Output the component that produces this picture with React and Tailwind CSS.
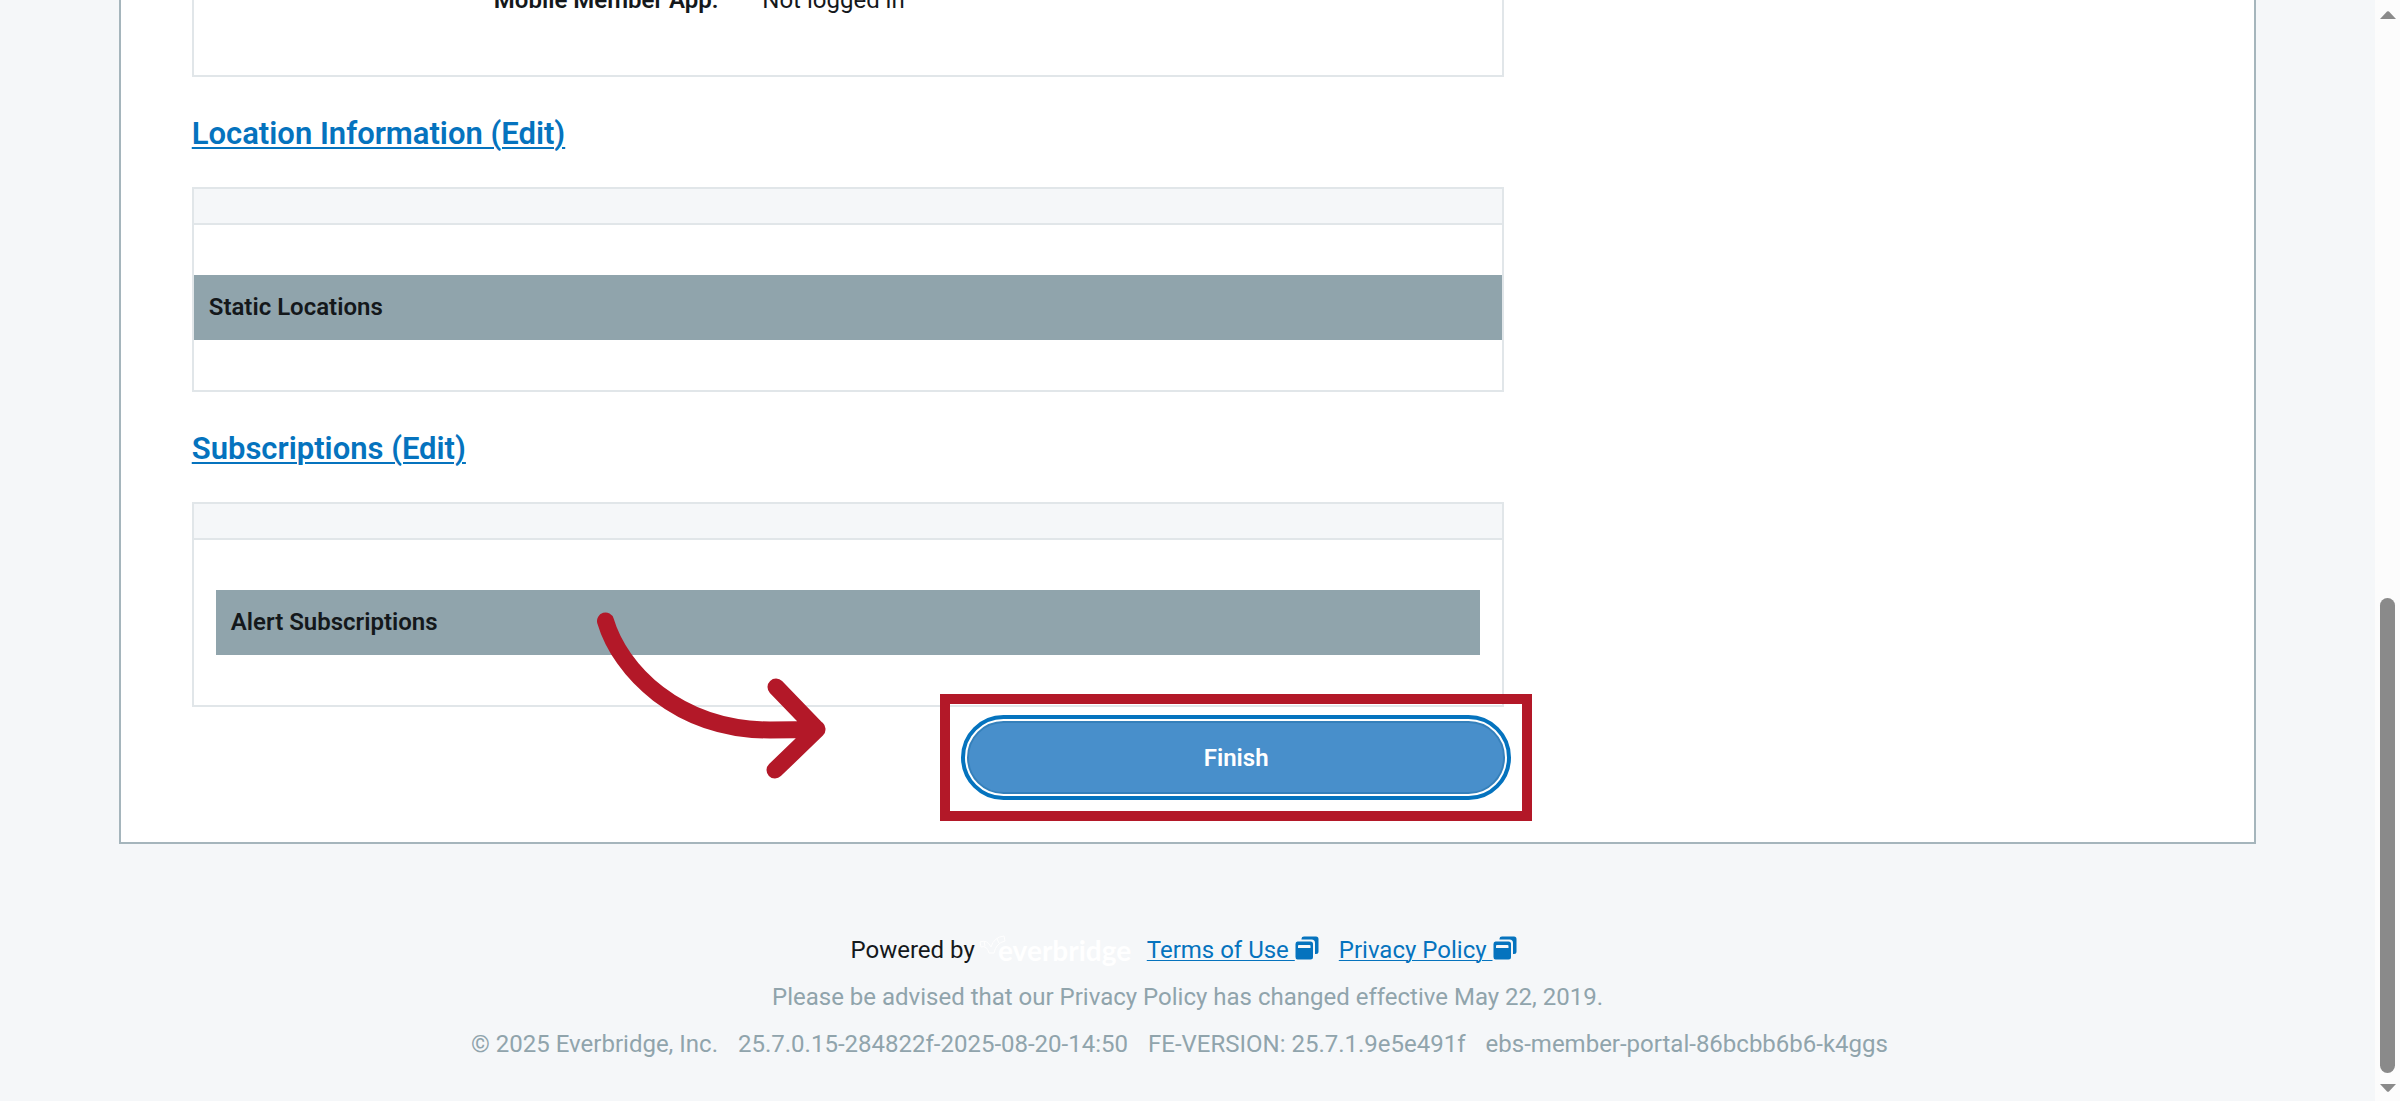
function ExternalIcon() {
  return (
    <svg className="inline-block h-6 w-6 align-[-2px]" viewBox="0 0 24 24" fill="#0573be" aria-hidden="true">
      <path d="M6.500 3.500V2.800Q6.500 .5 9 .5H21Q23.500 .5 23.500 3V15.500Q23.500 18 21 18H20V7Q20 3.500 16.500 3.500Z" />
      <path
        fillRule="evenodd"
        d="M2.500 5.500H15.500Q18 5.500 18 8V21Q18 23.500 15.500 23.500H2.500Q.5 23.500 .5 21V8Q.5 5.500 2.500 5.500ZM4 9Q3 9 3 10V12H15.500V10Q15.500 9 14.500 9Z"
      />
    </svg>
  );
}

function EverbridgeLogo() {
  return (
    <svg className="h-12 w-[156px] shrink-0" viewBox="0 0 156 48" role="img" aria-label="everbridge">
      <g fill="none" stroke="#ffffff" strokeWidth="1" strokeLinejoin="round">
        <path d="M1 15Q8 12 12 20Q15 10 25 9L26 14Q17 16 15 26H10Q8 18 2 20Z" />
        <path d="M5 14L6 19M18 12L20 16" />
      </g>
      <text x="19" y="34" fill="#ffffff" fontFamily="Lato, sans-serif" fontWeight="700" fontSize="28">
        everbridge
      </text>
    </svg>
  );
}

function SectionHeading({ children }) {
  return (
    <h2 className="flex h-[110px] items-center pt-[3px] text-[31px] font-semibold text-[#0573be]">
      <a href="#edit" className="underline decoration-2 underline-offset-3">
        {children}
      </a>
    </h2>
  );
}

function Card({ title, inset }) {
  return (
    <section className="w-[66%] border-2 border-[#e1e6e9] bg-white">
      <div className="h-[36px] border-b-2 border-[#e1e6e9] bg-[#f5f7f9]" />
      <div className={inset ? "px-[22px] py-[50px]" : "py-[50px]"}>
        <h3 className="bg-[#90a4ac] px-[15px] py-4 text-2xl leading-[33px] font-semibold text-[#14181b]">{title}</h3>
      </div>
    </section>
  );
}

function Scrollbar() {
  return (
    <div className="flex w-[25px] shrink-0 flex-col items-center bg-[#fcfcfc] pt-[11px] pb-[9px]" aria-hidden="true">
      <svg className="h-2 w-4" viewBox="0 0 16 8" fill="#8a8a8a">
        <path d="M0 8L7 .5Q8 0 9 .5L16 8Z" />
      </svg>
      <div className="mt-[11px] flex w-full flex-1 flex-col items-center justify-end">
        <div className="h-[45.500%] w-[15px] rounded-full bg-[#8a8a8a]" />
      </div>
      <svg className="mt-[11px] h-2 w-4" viewBox="0 0 16 8" fill="#8a8a8a">
        <path d="M0 0L7 7.500Q8 8 9 7.500L16 0Z" />
      </svg>
    </div>
  );
}

export default function App() {
  return (
    <div className="flex min-h-screen overflow-hidden bg-[#f5f7f9] font-[Roboto,sans-serif] text-2xl text-[#14181b]">
      <div className="min-w-0 flex-1">
        <main className="mx-[5%] border-x-2 border-b-2 border-[#a5b5bc] bg-white pr-[74px] pb-[21px] pl-[71px]">
          <section className="flow-root h-[77px] w-[66%] border-x-2 border-b-2 border-[#e1e6e9]">
            <dl className="-mt-4 ml-0.5 flex gap-11 leading-8">
              <dt className="w-[40%] text-right font-semibold">Mobile Member App:</dt>
              <dd>Not logged in</dd>
            </dl>
          </section>

          <SectionHeading>Location Information (Edit)</SectionHeading>
          <Card title="Static Locations" />

          <SectionHeading>Subscriptions (Edit)</SectionHeading>
          <div className="relative">
            <Card title="Alert Subscriptions" inset />
            <svg
              className="pointer-events-none absolute top-[101px] left-[401px] h-[190px] w-[250px]"
              viewBox="593 603 250 190"
              fill="none"
              stroke="#b31828"
              strokeWidth="17"
              strokeLinecap="round"
              strokeLinejoin="round"
              aria-hidden="true"
            >
              <path d="M605.500 621C620 670 677 730 770 730Q795 730 817 729M776 687L817 729.500L775 770" />
            </svg>
          </div>

          <div className="relative -mt-[13px] -mr-7 flex w-[66%] justify-end">
            <div className="-mr-7 w-[592px] shrink-0 border-10 border-[#b31828] p-[11px]">
              <button
                type="button"
                className="block h-[85px] w-full rounded-full border-4 border-[#0573be] bg-white p-[2px] text-2xl font-semibold text-white"
              >
                <span className="flex h-full items-center justify-center rounded-full border-2 border-[#3580bb] bg-[#488fcb]">
                  Finish
                </span>
              </button>
            </div>
          </div>
        </main>

        <footer className="pt-[83px] text-center leading-[47px] text-[#90a4ac]">
          <div className="flex h-[47px] items-center justify-center pr-2">
            <span className="mr-1 text-[#14181b]">Powered by</span>
            <EverbridgeLogo />
            <a href="#terms" className="ml-3 text-[#0573be] underline decoration-1 underline-offset-2">
              Terms of Use <ExternalIcon />
            </a>
            <a href="#privacy" className="ml-5 text-[#0573be] underline decoration-1 underline-offset-2">
              Privacy Policy <ExternalIcon />
            </a>
          </div>
          <p>Please be advised that our Privacy Policy has changed effective May 22, 2019.</p>
          <p className="flex justify-center gap-5 pr-4">
            <span>© 2025 Everbridge, Inc.</span>
            <span>25.7.0.15-284822f-2025-08-20-14:50</span>
            <span>FE-VERSION: 25.7.1.9e5e491f</span>
            <span>ebs-member-portal-86bcbb6b6-k4ggs</span>
          </p>
        </footer>
      </div>
      <Scrollbar />
    </div>
  );
}
